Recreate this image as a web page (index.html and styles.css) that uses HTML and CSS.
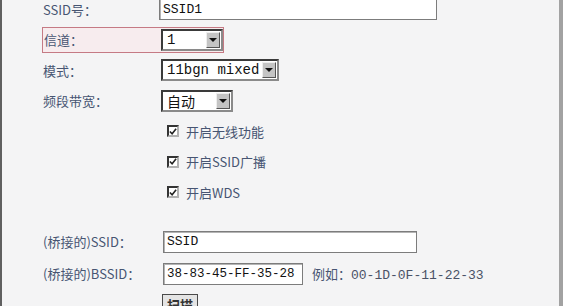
FILE: index.html
```html
<!DOCTYPE html>
<html lang="zh-CN">
<head>
    <meta charset="UTF-8">
    <title>无线设置</title>
    <link rel="stylesheet" href="styles.css">
</head>
<body>

    <div class="panel">
        <div class="row">
            <span class="label">SSID号：</span>
            <input type="text" class="text ssid" value="SSID1">
        </div>

        <div class="row">
            <div class="hl">
                <span class="label">信道：</span>
                <div class="select sel-channel"><span class="val">1</span><span class="drop"><i></i></span></div>
            </div>
        </div>

        <div class="row">
            <span class="label">模式：</span>
            <div class="select sel-mode"><span class="val">11bgn mixed</span><span class="drop"><i></i></span></div>
        </div>

        <div class="row">
            <span class="label">频段带宽：</span>
            <div class="select sel-width"><span class="val">自动</span><span class="drop"><i></i></span></div>
        </div>

        <div class="row check">
            <span class="box"><svg width="9" height="9" viewBox="0 0 9 9"><path d="M1 4.5 L3.5 7 L8 1.5" fill="none" stroke="#222" stroke-width="1.8"/></svg></span>
            <span class="ctext">开启无线功能</span>
        </div>
        <div class="row check">
            <span class="box"><svg width="9" height="9" viewBox="0 0 9 9"><path d="M1 4.5 L3.5 7 L8 1.5" fill="none" stroke="#222" stroke-width="1.8"/></svg></span>
            <span class="ctext">开启SSID广播</span>
        </div>
        <div class="row check">
            <span class="box"><svg width="9" height="9" viewBox="0 0 9 9"><path d="M1 4.5 L3.5 7 L8 1.5" fill="none" stroke="#222" stroke-width="1.8"/></svg></span>
            <span class="ctext">开启WDS</span>
        </div>

        <div class="spacer"></div>

        <div class="row bridge">
            <span class="label">(桥接的)SSID：</span>
            <input type="text" class="text bssid-name" value="SSID">
        </div>
        <div class="row bridge">
            <span class="label">(桥接的)BSSID：</span>
            <input type="text" class="text bssid" value="38-83-45-FF-35-28">
            <span class="hint">例如：<span class="mono">00-1D-0F-11-22-33</span></span>
        </div>
        <div class="btn-row">
            <button class="scan">扫描</button>
        </div>
    </div>

</body>
</html>
```

FILE: styles.css
```css
body {
    margin: 0;
    background: #fff;
    font-family: "Noto Sans CJK SC", sans-serif;
    font-size: 13px;
    color: #475572;
}

.panel {
    width: 563px;
    height: 330px;
    margin-top: -6px;
    padding-left: 40px;
    box-sizing: border-box;
    background: #f4f4f5;
    border-left: 2px solid #606060;
    border-right: 4px solid #a2a2a2;
    overflow: hidden;
}

.row {
    display: flex;
    align-items: center;
    height: 30.5px;
}

.label {
    width: 117px;
    padding-left: 1px;
    white-space: nowrap;
}

.row > .label {
    width: 118px;
}

.hl {
    display: flex;
    align-items: center;
    height: 24px;
    border: 1px solid #c57a84;
    background: #f7ecee;
}

.text {
    height: 22px;
    box-sizing: border-box;
    margin: 0;
    padding: 0 3px;
    border: 1px solid #7c7c7c;
    box-shadow: inset 1px 1px 0 #b4b4b4;
    background: #fff;
    font-family: "Liberation Mono", "Noto Sans CJK SC", monospace;
    font-size: 13px;
    color: #111;
    outline: none;
}

.ssid {
    width: 278px;
    margin-left: -2px;
}

.select {
    display: flex;
    align-items: center;
    height: 22px;
    box-sizing: border-box;
    border: 2px solid;
    border-color: #3a3a3a #8a8a8a #8a8a8a #3a3a3a;
    background: #fff;
    font-family: "Liberation Mono", "Noto Sans CJK SC", monospace;
    font-size: 14px;
    color: #111;
}

.val {
    flex: 1;
    padding-left: 4px;
    white-space: nowrap;
    overflow: hidden;
}

.drop {
    display: flex;
    align-items: center;
    justify-content: center;
    width: 14px;
    height: 16px;
    margin-right: 1px;
    box-sizing: border-box;
    border: 1px solid;
    border-color: #eee #555 #555 #eee;
    background: #c4c4c4;
}

.drop i {
    width: 0;
    height: 0;
    border-left: 4px solid transparent;
    border-right: 4px solid transparent;
    border-top: 4px solid #111;
}

.sel-channel { width: 62px; }
.sel-mode { width: 118px; }
.sel-width { width: 72px; }

.check {
    padding-left: 125px;
}

.box {
    display: flex;
    align-items: center;
    justify-content: center;
    width: 12px;
    height: 12px;
    box-sizing: border-box;
    border: 2px solid;
    border-color: #333 #b0b0b0 #b0b0b0 #333;
    background: #fff;
}

.ctext {
    margin-left: 7px;
}

.spacer {
    height: 18px;
}

.bridge {
    height: 32px;
}

.bssid-name {
    width: 254px;
    margin-left: 2px;
}

.bssid {
    width: 140px;
    margin-left: 2px;
    font-size: 12.5px;
}

.hint {
    margin-left: 9px;
    white-space: nowrap;
}

.mono {
    font-family: "Liberation Mono", monospace;
    color: #4a5266;
}

.btn-row {
    padding: 4px 0 0 120px;
}

.scan {
    height: 20px;
    padding: 0 4px;
    border: 1px solid #4a4a4a;
    background: #e4e4e4;
    font-family: "Noto Sans CJK SC", sans-serif;
    font-size: 13px;
    font-weight: bold;
    color: #333;
}
```
